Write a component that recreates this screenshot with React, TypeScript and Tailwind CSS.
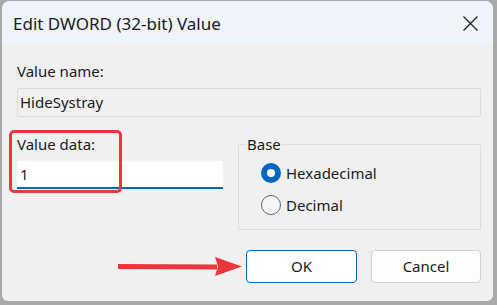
import React from 'react';

const font = { fontFamily: '"Noto Sans", "Open Sans", Arial, sans-serif' };

function Radio({ checked, label }: { checked?: boolean; label: string }) {
  return (
    <div className="flex items-center h-[20px] gap-[5px]">
      {checked ? (
        <span className="w-[20px] h-[20px] rounded-full bg-[#0067c0] flex items-center justify-center">
          <span className="w-[8px] h-[8px] rounded-full bg-white" />
        </span>
      ) : (
        <span className="w-[20px] h-[20px] rounded-full border border-[#616161] bg-[#f6f6f6]" />
      )}
      <span className="text-[15px] text-[#1b1b1b] leading-[20px]">{label}</span>
    </div>
  );
}

export default function App() {
  return (
    <div className="w-[497px] h-[305px] bg-[#a9a9a9] pl-[2px] pt-[1px]" style={font}>
      <div className="w-[491px] h-[300px] bg-[#f0f0f0] rounded-t-[8px] rounded-b-[6px] overflow-hidden flex flex-col">
        {/* title bar */}
        <div className="h-[44px] bg-[#eff3fa] flex items-center justify-between pl-[11px] pr-[15px] shrink-0">
          <span className="text-[17px] text-[#1a1a1a] leading-none">Edit DWORD (32-bit) Value</span>
          <svg width="15" height="15" viewBox="0 0 15 15" className="mt-[1px]">
            <path d="M0.5 0.5 L14.5 14.5 M14.5 0.5 L0.5 14.5" stroke="#1a1a1a" strokeWidth="1.2" />
          </svg>
        </div>

        {/* body */}
        <div className="relative flex flex-col pl-[15px] pr-[12px] pt-[16px] text-[#1b1b1b]">
          <div className="text-[15px] leading-[20px]">Value name:</div>
          <div className="mt-[7px] h-[29px] border border-[#dadada] rounded-[2px] flex items-center pl-[2px] text-[15px]">
            HideSystray
          </div>

          <div className="flex mt-[17px] gap-[15px]">
            {/* value data */}
            <div className="relative w-[207px] -ml-[1px] pl-[1px]">
              <div className="text-[15px] leading-[20px]">Value data:</div>
              <div className="mt-[7px] h-[28px] bg-white border-b-2 border-[#0067c0] flex items-center pl-[3px] text-[15px]">
                1
              </div>
              <div className="absolute -left-[7px] -top-[4px] w-[113px] h-[63px] border-[3px] border-[#e8383d] rounded-[5px]" />
            </div>

            {/* base group */}
            <div className="relative flex-1 pt-[10px]">
              <div className="h-[86px] border border-[#dcdcdc] rounded-[1px] flex flex-col pl-[22px] pt-[18px] gap-[12px]">
                <Radio checked label="Hexadecimal" />
                <Radio label="Decimal" />
              </div>
              <span className="absolute left-[8px] top-0 bg-[#f0f0f0] px-[1px] text-[15px] leading-[20px]">Base</span>
            </div>
          </div>

          {/* buttons */}
          <div className="relative flex justify-end gap-[14px] mt-[20px]">
            <svg
              width="126"
              height="22"
              viewBox="0 0 126 22"
              className="absolute left-[101px] top-[6px]"
            >
              <path d="M0 8 L99 8.5 L99 13.5 L0 13 Z" fill="#e8383d" />
              <path d="M97 1 L124 10.5 L97 20 L100 10.5 Z" fill="#e8383d" />
            </svg>
            <button className="w-[111px] h-[33px] bg-white border border-[#0067c0] rounded-[4px] text-[15px] text-[#1b1b1b]">
              OK
            </button>
            <button className="w-[110px] h-[33px] bg-[#fdfdfd] border border-[#d0d0d0] rounded-[4px] text-[15px] text-[#1b1b1b]">
              Cancel
            </button>
          </div>
        </div>
      </div>
    </div>
  );
}
